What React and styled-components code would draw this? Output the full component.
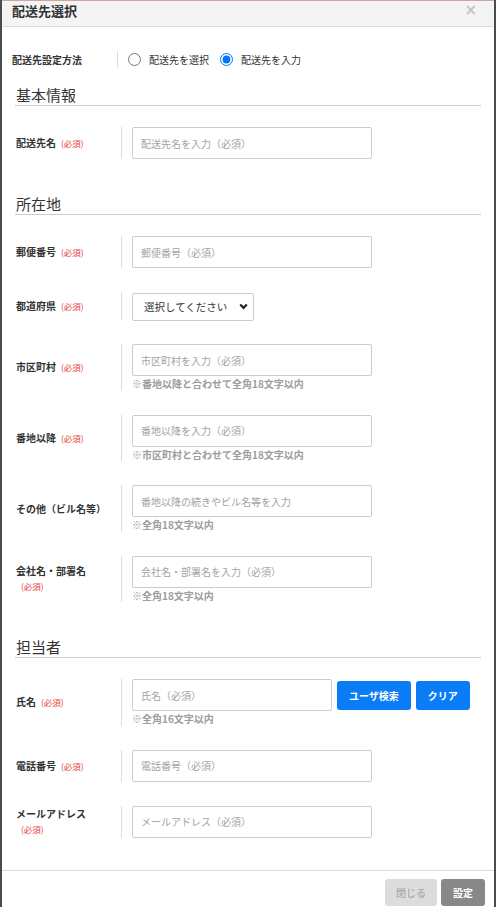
import React from "react";
import styled, { createGlobalStyle } from "styled-components";

// global
const GlobalStyle = createGlobalStyle`
  html, body {
    margin: 0;
    padding: 0;
    height: 100%;
    overflow: hidden;
    background: #4b4b4b;
  }
  body {
    font-family: "Noto Sans CJK JP", "Noto Sans", sans-serif;
    color: #333;
  }
  * {
    box-sizing: border-box;
  }
`;

// modal frame
const Modal = styled.div`
  margin: 0 2px;
  min-height: 920px;
  background: #ffffff;
  border-top: 1px solid #c9a99b;
`;

const Header = styled.div`
  display: flex;
  justify-content: space-between;
  align-items: flex-start;
  height: 26px;
  padding: 1px 17px 0 10px;
  background: #f4f4f4;
  border-bottom: 1px solid #dedede;
`;

const Title = styled.h1`
  margin: 0;
  font-size: 13px;
  line-height: 17px;
  font-weight: 700;
  color: #333;
`;

const CloseBtn = styled.button`
  border: none;
  background: none;
  padding: 0;
  margin-top: 1px;
  font-family: "DejaVu Sans", sans-serif;
  font-size: 15px;
  line-height: 14px;
  font-weight: 700;
  color: #c4c4c4;
`;

const Body = styled.div`
  display: flex;
  flex-direction: column;
  padding: 23px 13px 8px;
`;

// 配送先設定方法
const MethodRow = styled.div`
  display: flex;
  align-items: center;
  height: 18px;
  margin-left: -3px;
`;

const MethodLabel = styled.div`
  width: 105px;
  font-size: 10px;
  font-weight: 700;
`;

const MethodOptions = styled.div`
  display: flex;
  align-items: center;
  height: 17px;
  padding-left: 10px;
  border-left: 1px solid #dddddd;
`;

const RadioLabel = styled.label`
  display: inline-flex;
  align-items: center;
  gap: 8px;
  margin-right: 11px;
  font-size: 10px;
  color: #333;

  input {
    margin: 0;
    width: 13px;
    height: 13px;
  }
`;

// sections
const SectionTitle = styled.h2`
  margin: ${(p) => (p.$first ? 17 : 11)}px 0 21px;
  padding-left: 1px;
  font-size: 15px;
  line-height: 20px;
  font-weight: 400;
  color: #333;
  border-bottom: 1px solid #cccccc;
`;

const Row = styled.div`
  display: flex;
  align-items: center;
  margin-bottom: 24px;
`;

const LabelCol = styled.div`
  width: 106px;
  flex-shrink: 0;
  padding: 0 12px 0 1px;
  font-size: 10px;
  line-height: 15px;
  font-weight: 700;
  color: #333;
`;

const Required = styled.span`
  margin-left: 5px;
  font-size: 8.5px;
  font-weight: 400;
  color: #e8423a;
  white-space: nowrap;
`;

const FieldCol = styled.div`
  padding-left: 10px;
  border-left: 1px solid #dddddd;
`;

const InputLine = styled.div`
  display: flex;
  align-items: center;
  gap: 5px;
`;

const TextInput = styled.input`
  width: ${(p) => p.$w || 240}px;
  height: 32px;
  padding: 0 8px;
  border: 1px solid #cccccc;
  border-radius: 2px;
  font-family: inherit;
  font-size: 10px;
  color: #333;
  outline: none;

  &::placeholder {
    color: #a3a3a3;
  }
`;

const Note = styled.div`
  margin-top: 1px;
  font-size: 10px;
  line-height: 13.5px;
  font-weight: 700;
  color: #9d9d9d;
`;

const SelectWrap = styled.div`
  position: relative;
  width: 122px;
  height: 28px;
`;

const Select = styled.select`
  width: 100%;
  height: 100%;
  padding: 0 0 0 11px;
  appearance: none;
  -webkit-appearance: none;
  border: 1px solid #cccccc;
  border-radius: 2px;
  background: #fff;
  font-family: inherit;
  font-size: 10.5px;
  color: #333;
`;

const Chevron = styled.svg`
  position: absolute;
  right: 6px;
  top: 11px;
  pointer-events: none;
`;

const BlueButton = styled.button`
  height: 29px;
  padding: 0 12px;
  border: none;
  border-radius: 3px;
  background: #0a7cf6;
  color: #ffffff;
  font-family: inherit;
  font-size: 10px;
  font-weight: 700;
`;

// footer
const Footer = styled.div`
  display: flex;
  justify-content: flex-end;
  gap: 4px;
  padding: 8px 9px 8px;
  border-top: 1px solid #dddddd;
`;

const FooterButton = styled.button`
  height: 27px;
  padding: 0 ${(p) => (p.$primary ? 12 : 11)}px;
  border: none;
  border-radius: 3px;
  font-family: inherit;
  font-size: 10px;
  background: ${(p) => (p.$primary ? "#888888" : "#dcdcdc")};
  color: ${(p) => (p.$primary ? "#ffffff" : "#9c9c9c")};
  font-weight: ${(p) => (p.$primary ? 700 : 400)};
`;

const Field = ({ label, required, placeholder, note, width }) => (
  <Row>
    <LabelCol>
      {label}
      {required && <Required>(必須)</Required>}
    </LabelCol>
    <FieldCol>
      <TextInput placeholder={placeholder} $w={width} />
      {note && <Note>{note}</Note>}
    </FieldCol>
  </Row>
);

const App = () => {
  return (
    <>
      <GlobalStyle />
      <Modal>
        <Header>
          <Title>配送先選択</Title>
          <CloseBtn>×</CloseBtn>
        </Header>
        <Body>
          <MethodRow>
            <MethodLabel>配送先設定方法</MethodLabel>
            <MethodOptions>
              <RadioLabel>
                <input type="radio" name="method" />
                配送先を選択
              </RadioLabel>
              <RadioLabel>
                <input type="radio" name="method" defaultChecked />
                配送先を入力
              </RadioLabel>
            </MethodOptions>
          </MethodRow>

          <SectionTitle $first>基本情報</SectionTitle>
          <Field label="配送先名" required placeholder="配送先名を入力（必須）" />

          <SectionTitle>所在地</SectionTitle>
          <Field label="郵便番号" required placeholder="郵便番号（必須）" />
          <Row>
            <LabelCol>
              都道府県<Required>(必須)</Required>
            </LabelCol>
            <FieldCol>
              <SelectWrap>
                <Select defaultValue="">
                  <option value="">選択してください</option>
                </Select>
                <Chevron width="9" height="7" viewBox="0 0 9 7">
                  <path d="M1.2 1.4 L4.5 4.8 L7.8 1.4" fill="none" stroke="#222" strokeWidth="2.2" />
                </Chevron>
              </SelectWrap>
            </FieldCol>
          </Row>
          <Field
            label="市区町村"
            required
            placeholder="市区町村を入力（必須）"
            note="※番地以降と合わせて全角18文字以内"
          />
          <Field
            label="番地以降"
            required
            placeholder="番地以降を入力（必須）"
            note="※市区町村と合わせて全角18文字以内"
          />
          <Field
            label="その他（ビル名等）"
            placeholder="番地以降の続きやビル名等を入力"
            note="※全角18文字以内"
          />
          <Field
            label="会社名・部署名"
            required
            placeholder="会社名・部署名を入力（必須）"
            note="※全角18文字以内"
          />

          <SectionTitle>担当者</SectionTitle>
          <Row>
            <LabelCol>
              氏名<Required>(必須)</Required>
            </LabelCol>
            <FieldCol>
              <InputLine>
                <TextInput placeholder="氏名（必須）" $w={200} />
                <BlueButton>ユーザ検索</BlueButton>
                <BlueButton>クリア</BlueButton>
              </InputLine>
              <Note>※全角16文字以内</Note>
            </FieldCol>
          </Row>
          <Field label="電話番号" required placeholder="電話番号（必須）" />
          <Field label="メールアドレス" required placeholder="メールアドレス（必須）" />
        </Body>
        <Footer>
          <FooterButton>閉じる</FooterButton>
          <FooterButton $primary>設定</FooterButton>
        </Footer>
      </Modal>
    </>
  );
};

export default App;
